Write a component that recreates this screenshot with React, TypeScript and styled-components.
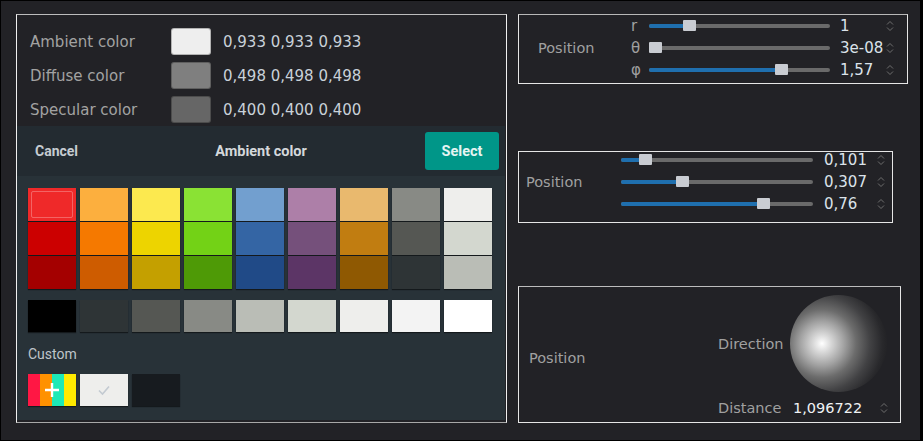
import styled, { createGlobalStyle } from "styled-components";

const GlobalStyle = createGlobalStyle`
  html, body {
    margin: 0;
    padding: 0;
    background: #222226;
  }
  * {
    box-sizing: border-box;
  }
`;

const properties = [
  { label: "Ambient color", color: "#eeeeee", value: "0,933 0,933 0,933" },
  { label: "Diffuse color", color: "#7f7f7f", value: "0,498 0,498 0,498" },
  { label: "Specular color", color: "#666666", value: "0,400 0,400 0,400" },
];

const palette = [
  ["#ef2929", "#fcaf3e", "#fce94f", "#8ae234", "#729fcf", "#ad7fa8", "#e9b96e", "#888a85", "#eeeeec"],
  ["#cc0000", "#f57900", "#edd400", "#73d216", "#3465a4", "#75507b", "#c17d11", "#555753", "#d3d7cf"],
  ["#a40000", "#ce5c00", "#c4a000", "#4e9a06", "#204a87", "#5c3566", "#8f5902", "#2e3436", "#babdb6"],
];

const grays = ["#000000", "#2e3436", "#555753", "#888a85", "#babdb6", "#d3d7cf", "#eeeeec", "#f3f3f3", "#ffffff"];

const sphericalRows = [
  { sym: "r", pct: 20, value: "1" },
  { sym: "θ", pct: 0, value: "3e-08" },
  { sym: "φ", pct: 75, value: "1,57" },
];

const cartesianRows = [
  { pct: 10, value: "0,101" },
  { pct: 31, value: "0,307" },
  { pct: 76, value: "0,76" },
];

const SpinIcon = () => (
  <svg width="8" height="14" viewBox="0 0 8 14" fill="none" stroke="#6e6e6e" strokeWidth="1">
    <path d="M1 5.5 L4 2.5 L7 5.5" />
    <path d="M1 8.5 L4 11.5 L7 8.5" />
  </svg>
);

const Slider = ({ pct }: { pct: number }) => (
  <Track>
    <Fill style={{ width: `${pct}%` }} />
    <Thumb style={{ left: `calc(${pct}% - ${(pct / 100) * 13}px)` }} />
  </Track>
);

const App = () => {
  return (
    <>
      <GlobalStyle />
      <Frame>
        <LeftPanel>
          <PropList>
            {properties.map((p) => (
              <PropRow key={p.label}>
                <PropLabel>{p.label}</PropLabel>
                <ColorWell $color={p.color} />
                <PropValue>{p.value}</PropValue>
              </PropRow>
            ))}
          </PropList>
          <Dialog>
            <DialogHeader>
              <TextButton>Cancel</TextButton>
              <DialogTitle>Ambient color</DialogTitle>
              <SelectButton>Select</SelectButton>
            </DialogHeader>
            <DialogBody>
              <SwatchGrid>
                {palette.flat().map((c, i) => (
                  <Swatch key={i} $color={c} $selected={i === 0} />
                ))}
              </SwatchGrid>
              <GrayRow>
                {grays.map((c) => (
                  <Swatch key={c} $color={c} />
                ))}
              </GrayRow>
              <SectionLabel>Custom</SectionLabel>
              <CustomRow>
                <AddSwatch>
                  <Stripe $color="#ff1744" />
                  <Stripe $color="#ff9100" />
                  <Stripe $color="#1de9b6" />
                  <Stripe $color="#ffea00" />
                  <PlusIcon width="16" height="16" viewBox="0 0 16 16">
                    <path d="M8 1 V15 M1 8 H15" stroke="#fff" strokeWidth="2.4" />
                  </PlusIcon>
                </AddSwatch>
                <CheckSwatch>
                  <svg width="14" height="12" viewBox="0 0 14 12" fill="none">
                    <path d="M2 6.5 L5.5 10 L12 2.5" stroke="#c3cad1" strokeWidth="1.6" />
                  </svg>
                </CheckSwatch>
                <Swatch $color="#171b1f" />
              </CustomRow>
            </DialogBody>
          </Dialog>
        </LeftPanel>

        <RightColumn>
          <SphericalPanel>
            <GroupLabel $rows={3}>Position</GroupLabel>
            {sphericalRows.map((r) => (
              <SliderRow key={r.sym}>
                <AxisLabel>{r.sym}</AxisLabel>
                <Slider pct={r.pct} />
                <NumValue>{r.value}</NumValue>
                <SpinIcon />
              </SliderRow>
            ))}
          </SphericalPanel>

          <CartesianPanel>
            <GroupLabel $rows={3}>Position</GroupLabel>
            {cartesianRows.map((r) => (
              <SliderRow key={r.value}>
                <Slider pct={r.pct} />
                <NumValue>{r.value}</NumValue>
                <SpinIcon />
              </SliderRow>
            ))}
          </CartesianPanel>

          <DirectionPanel>
            <GroupLabel $rows={2}>Position</GroupLabel>
            <DirectionRow>
              <SubLabel>Direction</SubLabel>
              <Sphere />
            </DirectionRow>
            <DistanceRow>
              <SubLabel>Distance</SubLabel>
              <DistanceValue>1,096722</DistanceValue>
              <SpinIcon />
            </DistanceRow>
          </DirectionPanel>
        </RightColumn>
      </Frame>
    </>
  );
};

export default App;

const Frame = styled.div`
  width: 923px;
  height: 441px;
  background: #222226;
  border: 1px solid #000;
  border-right-width: 3px;
  display: flex;
  gap: 11px;
  padding: 13px 0 0 15px;
  font-family: "DejaVu Sans", sans-serif;
  overflow: hidden;
`;

const LeftPanel = styled.div`
  width: 491px;
  height: 409px;
  flex-shrink: 0;
  border: 1px solid #f0f0f0;
  border-top-color: #bdbdbd;
  border-bottom-color: #a8a8a8;
  display: flex;
  flex-direction: column;
`;

const PropList = styled.div`
  display: flex;
  flex-direction: column;
  gap: 7px;
  padding: 13px 0 0 13px;
`;

const PropRow = styled.div`
  display: grid;
  grid-template-columns: 129px 40px auto;
  column-gap: 12px;
  align-items: center;
  height: 27px;
`;

const PropLabel = styled.span`
  color: #a2a2a2;
  font-size: 15px;
`;

const ColorWell = styled.div<{ $color: string }>`
  width: 40px;
  height: 27px;
  border-radius: 3px;
  background: ${(p) => p.$color};
  border: 1px solid rgba(0, 0, 0, 0.25);
`;

const PropValue = styled.span`
  color: #c9d1d9;
  font-size: 15px;
`;

const Dialog = styled.div`
  flex: 1;
  margin: 3px 1px 2px 0;
  background: #283238;
  display: flex;
  flex-direction: column;
  font-family: Roboto, "Liberation Sans", sans-serif;
`;

const DialogHeader = styled.div`
  display: grid;
  grid-template-columns: 1fr auto 1fr;
  align-items: center;
  padding: 6px;
  background: #232b31;
`;

const TextButton = styled.span`
  justify-self: start;
  padding-left: 12px;
  color: #c6ccd1;
  font-weight: bold;
  font-size: 14px;
`;

const DialogTitle = styled.span`
  color: #d4d8db;
  font-weight: bold;
  font-size: 14.5px;
`;

const SelectButton = styled.button`
  justify-self: end;
  width: 74px;
  height: 38px;
  border: none;
  border-radius: 3px;
  background: #009688;
  color: #e6f4f2;
  font-family: Roboto, "Liberation Sans", sans-serif;
  font-weight: bold;
  font-size: 14.5px;
`;

const DialogBody = styled.div`
  padding: 12px 11px 0 11px;
  display: flex;
  flex-direction: column;
`;

const SwatchGrid = styled.div`
  display: grid;
  grid-template-columns: repeat(9, 48px);
  grid-auto-rows: 33px;
  column-gap: 4px;
  row-gap: 1px;
`;

const GrayRow = styled(SwatchGrid)`
  margin-top: 11px;
  grid-auto-rows: 32px;
`;

const Swatch = styled.div<{ $color: string; $selected?: boolean }>`
  position: relative;
  width: 48px;
  background: ${(p) => p.$color};
  box-shadow: 0 1px 1px rgba(0, 0, 0, 0.5);

  &::after {
    content: "";
    display: ${(p) => (p.$selected ? "block" : "none")};
    position: absolute;
    inset: 3px;
    border: 1px solid rgba(255, 255, 255, 0.28);
    border-radius: 2px;
  }
`;

const SectionLabel = styled.div`
  margin-top: 12px;
  line-height: 20px;
  color: #bfc5ca;
  font-size: 14px;
`;

const CustomRow = styled.div`
  display: grid;
  grid-template-columns: repeat(3, 48px);
  grid-auto-rows: 32px;
  column-gap: 4px;
  margin-top: 10px;
`;

const AddSwatch = styled.div`
  position: relative;
  display: flex;
  box-shadow: 0 1px 1px rgba(0, 0, 0, 0.45);
`;

const Stripe = styled.div<{ $color: string }>`
  flex: 1;
  background: ${(p) => p.$color};
`;

const PlusIcon = styled.svg`
  position: absolute;
  left: 16px;
  top: 8px;
`;

const CheckSwatch = styled.div`
  display: flex;
  align-items: center;
  justify-content: center;
  background: #eeeeec;
  box-shadow: 0 1px 1px rgba(0, 0, 0, 0.45);
`;

const RightColumn = styled.div`
  display: flex;
  flex-direction: column;
  align-items: flex-start;
`;

const PanelBase = styled.div`
  border: 1px solid #e6e6e6;
  display: grid;
  align-items: center;
`;

const SphericalPanel = styled(PanelBase)`
  width: 390px;
  height: 70px;
  padding: 3px 0 0 19px;
  grid-template-columns: 93px 1fr;
  grid-template-rows: repeat(3, 16px);
  row-gap: 6px;
  align-content: start;
  border-top-color: #b8b8b8;
`;

const CartesianPanel = styled(PanelBase)`
  width: 375px;
  height: 72px;
  margin-top: 67px;
  padding: 0 0 0 7px;
  grid-template-columns: 95px 1fr;
  grid-template-rows: repeat(3, 16px);
  row-gap: 6px;
  align-content: start;
`;

const DirectionPanel = styled(PanelBase)`
  width: 383px;
  height: 137px;
  margin-top: 63px;
  padding: 8px 0 0 10px;
  grid-template-columns: 189px 1fr;
  grid-template-rows: 97px 24px;
  row-gap: 4px;
  align-content: start;
  border-top-color: #bdbdbd;
`;

const GroupLabel = styled.span<{ $rows: number }>`
  grid-column: 1;
  grid-row: 1 / ${(p) => p.$rows + 1};
  align-self: center;
  color: #a0a0a0;
  font-size: 14.5px;
`;

const SliderRow = styled.div`
  grid-column: 2;
  display: flex;
  align-items: center;
  height: 16px;
`;

const AxisLabel = styled.span`
  width: 18px;
  color: #a0a0a0;
  font-size: 15px;
`;

const Track = styled.div`
  position: relative;
  width: 181px;
  height: 4px;
  border-radius: 2px;
  background: #6a6a6a;

  ${CartesianPanel} & {
    width: 192px;
  }
`;

const Fill = styled.div`
  height: 100%;
  border-radius: 2px;
  background: #1f6fae;
`;

const Thumb = styled.div`
  position: absolute;
  top: -4px;
  width: 13px;
  height: 11px;
  border-radius: 1px;
  background: #c9ccd2;
`;

const NumValue = styled.span`
  width: 46px;
  margin-left: 10px;
  color: #dbe2ea;
  font-size: 15px;
  white-space: nowrap;

  ${CartesianPanel} & {
    width: 53px;
    margin-left: 11px;
  }
`;

const DirectionRow = styled.div`
  grid-column: 2;
  grid-row: 1;
  display: flex;
  align-items: center;
  height: 97px;
`;

const SubLabel = styled.span`
  width: 72px;
  color: #a0a0a0;
  font-size: 14.5px;
`;

const Sphere = styled.div`
  width: 97px;
  height: 97px;
  border-radius: 50%;
  background: radial-gradient(
    circle 64px at 33% 50%,
    #ffffff 0px,
    #d8d8d8 9px,
    #a2a2a2 22px,
    #6c6c6c 34px,
    #424244 48px,
    #29292c 60px,
    #242427 64px
  );
`;

const DistanceRow = styled.div`
  grid-column: 2;
  grid-row: 2;
  display: flex;
  align-items: center;
`;

const DistanceValue = styled.span`
  width: 87px;
  margin-left: 3px;
  color: #f0f2f4;
  font-size: 14.5px;
`;
